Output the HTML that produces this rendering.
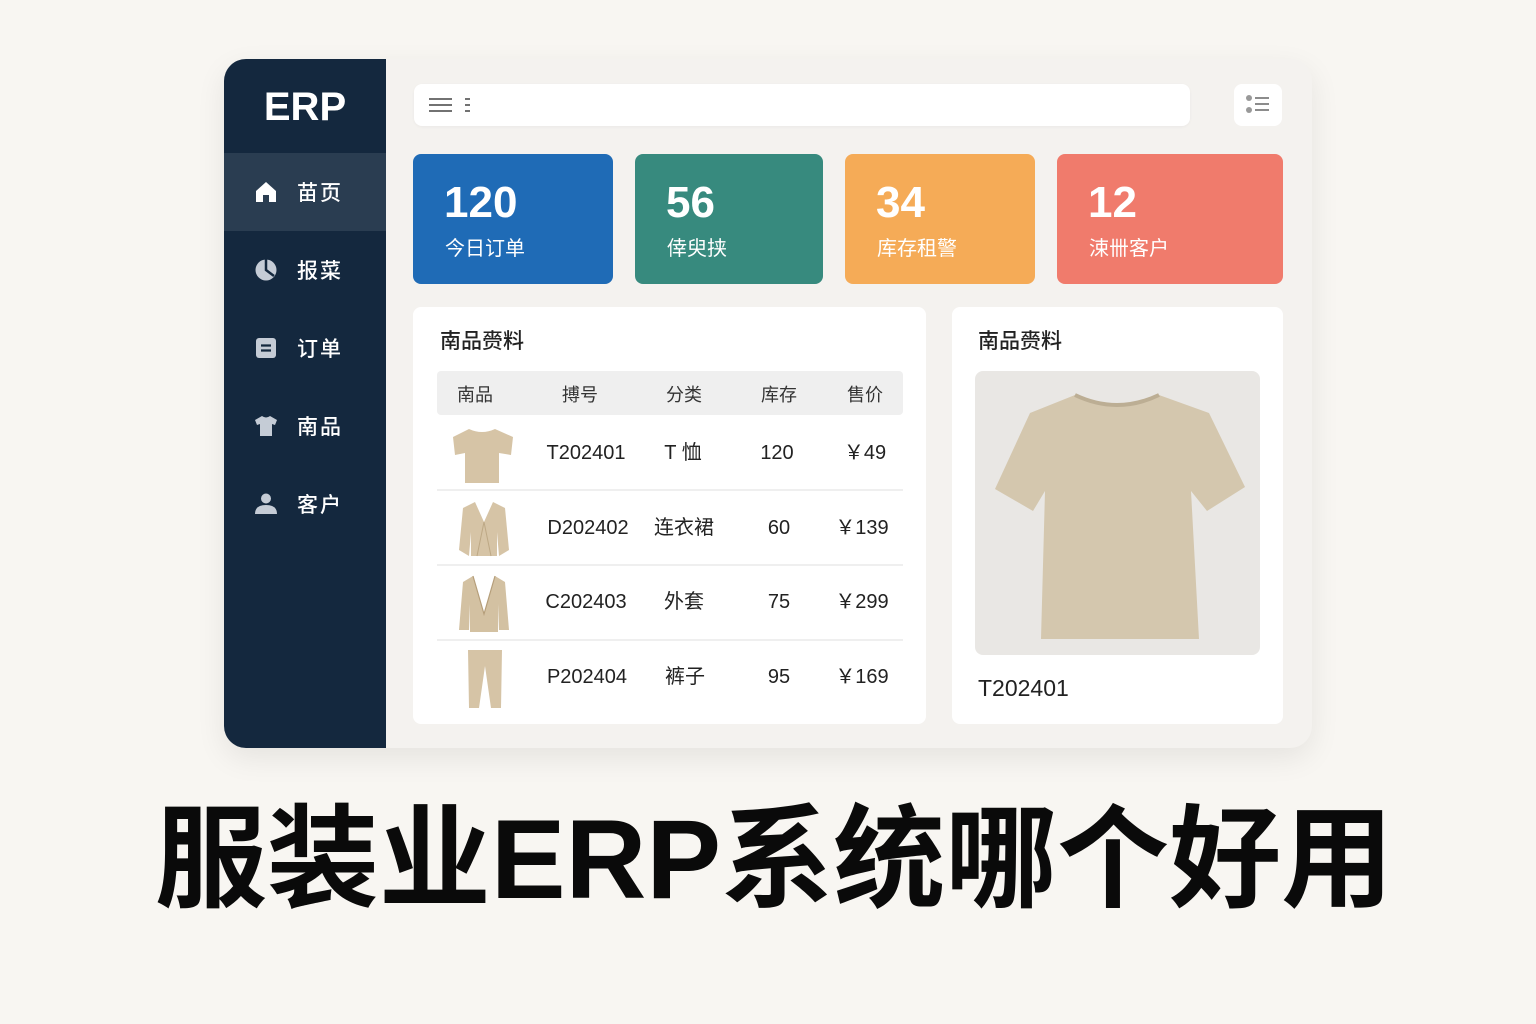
<!DOCTYPE html>
<html><head><meta charset="utf-8"><style>
*{margin:0;padding:0;box-sizing:border-box}
body{width:1536px;height:1024px;background:#f8f6f2;font-family:"Liberation Sans","Noto Sans CJK SC",sans-serif;position:relative;overflow:hidden}
.abs{position:absolute}
.win{left:224px;top:59px;width:1088px;height:689px;border-radius:22px;background:#f4f2ef;overflow:hidden;box-shadow:0 10px 30px rgba(0,0,0,.08)}
.side{left:0;top:0;width:162px;height:689px;background:#14283e}
.logo{left:0;width:162px;top:26px;text-align:center;color:#fff;font-size:40px;font-weight:bold;letter-spacing:0}
.nav{left:0;width:162px;height:78px;color:#fff;font-size:21px}
.nav .ic{position:absolute;left:30px;top:27px;width:24px;height:24px}
.nav span{position:absolute;left:73px;top:24px;font-family:"Noto Sans CJK SC",sans-serif;font-weight:500;letter-spacing:2px}
.card{top:95px;height:130px;border-radius:8px;color:#fff}
.card b{position:absolute;left:31px;top:24px;font-size:44px;font-family:"Liberation Sans",sans-serif;font-weight:bold}
.card span{position:absolute;left:32px;top:78px;font-size:20px;font-family:"Noto Sans CJK SC",sans-serif}
.panel{background:#fff;border-radius:8px;top:248px;height:417px}
.ptitle{position:absolute;top:18px;font-size:21px;color:#222;font-family:"Noto Sans CJK SC",sans-serif;font-weight:500}
.th{position:absolute;font-size:18px;color:#333;font-family:"Noto Sans CJK SC",sans-serif;transform:translateX(-50%)}
.td{position:absolute;font-size:20px;color:#222;transform:translateX(-50%);white-space:nowrap;font-family:"Liberation Sans","Noto Sans CJK SC",sans-serif;height:30px;line-height:30px}
.sep{position:absolute;left:24px;width:466px;height:2px;background:#efefef}
</style></head><body>
<div class="abs win">
 <div class="abs side">
  <div class="abs logo">ERP</div>
  <div class="abs nav" style="top:94px;background:#2a3d51">
   <svg class="ic" viewBox="0 0 24 24"><path d="M2 11 L12 2 L22 11 V22 H15 V15 H9 V22 H2Z" fill="#fff"/></svg><span>苗页</span></div>
  <div class="abs nav" style="top:172px">
   <svg class="ic" viewBox="0 0 24 24"><circle cx="12" cy="12" r="10.5" fill="#c5ccd6"/><path d="M12 1.5 V12 L20 18" stroke="#14283e" stroke-width="2.5" fill="none"/></svg><span>报菜</span></div>
  <div class="abs nav" style="top:250px">
   <svg class="ic" viewBox="0 0 24 24"><rect x="2" y="2" width="20" height="20" rx="3" fill="#c5ccd6"/><path d="M7 9.5H17M7 14.5H17" stroke="#14283e" stroke-width="2.2"/></svg><span>订单</span></div>
  <div class="abs nav" style="top:328px">
   <svg class="ic" viewBox="0 0 24 24"><path d="M8 2 L1 6 L3 11 L6 10 V22 H18 V10 L21 11 L23 6 L16 2 Q12 5 8 2Z" fill="#c5ccd6"/></svg><span>南品</span></div>
  <div class="abs nav" style="top:406px">
   <svg class="ic" viewBox="0 0 24 24"><circle cx="12" cy="6.5" r="5" fill="#c5ccd6"/><path d="M1 22 Q1 13 12 13 Q23 13 23 22Z" fill="#c5ccd6"/></svg><span>客户</span></div>
 </div>
 <div class="abs" style="left:190px;top:25px;width:776px;height:42px;background:#fff;border-radius:8px;box-shadow:0 1px 3px rgba(0,0,0,.04)">
  <svg class="abs" style="left:14px;top:12px" width="50" height="18" viewBox="0 0 50 18"><path d="M1 3H24M1 9H24M1 15H24" stroke="#444" stroke-width="1.6"/><path d="M37 3H42M37 9H42M37 15H42" stroke="#444" stroke-width="1.6"/></svg>
 </div>
 <div class="abs" style="left:1010px;top:25px;width:48px;height:42px;background:#fff;border-radius:8px">
  <svg class="abs" style="left:11px;top:10px" width="26" height="22" viewBox="0 0 26 22"><circle cx="4" cy="4" r="3" fill="#999"/><circle cx="4" cy="16" r="3" fill="#999"/><path d="M10 4H24M10 10H24M10 16H24" stroke="#666" stroke-width="1.6"/></svg>
 </div>
 <div class="abs card" style="left:189px;width:200px;background:#1f6bb6"><b>120</b><span>今日订单</span></div>
 <div class="abs card" style="left:411px;width:188px;background:#378a7e"><b>56</b><span>倖臾挟</span></div>
 <div class="abs card" style="left:621px;width:190px;background:#f5ab57"><b>34</b><span>库存租警</span></div>
 <div class="abs card" style="left:833px;width:226px;background:#f07b6c"><b>12</b><span>涑卌客户</span></div>
 <div class="abs panel" style="left:189px;width:513px">
  <div class="ptitle" style="left:27px">南品赍料</div>
  <div class="abs" style="left:24px;top:64px;width:466px;height:44px;background:#efefef;border-radius:4px"></div>
  <div class="th" style="left:62px;top:74px">南品</div>
  <div class="th" style="left:167px;top:74px">搏号</div>
  <div class="th" style="left:271px;top:74px">分类</div>
  <div class="th" style="left:366px;top:74px">库存</div>
  <div class="th" style="left:452px;top:74px">售价</div>
  <div class="sep" style="top:182px"></div><div class="sep" style="top:257px"></div><div class="sep" style="top:332px"></div>
  <svg class="abs" style="left:36px;top:118px" width="66" height="60" viewBox="0 0 66 60"><path d="M20 4 L4 12 L6 30 L16 28 V58 H50 V28 L62 30 L64 12 L46 4 Q33 10 20 4Z" fill="#d6c4a6"/></svg>
  <svg class="abs" style="left:44px;top:193px" width="54" height="58" viewBox="0 0 54 58"><path d="M18 2 L6 8 L2 50 L12 56 L14 32 V56 H40 V32 L42 56 L52 50 L48 8 L36 2 L27 22Z" fill="#d6c4a6"/><path d="M27 22 L20 56M27 22 L34 56" stroke="#bda885" stroke-width="1" fill="none"/></svg>
  <svg class="abs" style="left:44px;top:267px" width="54" height="60" viewBox="0 0 54 60"><path d="M16 2 L6 8 L2 56 L12 56 L13 30 V58 H41 V30 L42 56 L52 56 L48 8 L38 2 L27 40Z" fill="#d3c1a2"/><path d="M16 2 L27 40 L38 2" stroke="#b59e7a" stroke-width="1.2" fill="none"/></svg>
  <svg class="abs" style="left:52px;top:341px" width="40" height="62" viewBox="0 0 40 62"><path d="M3 2 H37 L36 60 H26 L20 18 L14 60 H4Z" fill="#d6c4a6"/></svg>
  <div class="td" style="left:173px;top:131px">T202401</div><div class="td" style="left:270px;top:131px">T 恤</div><div class="td" style="left:364px;top:131px">120</div><div class="td" style="left:452px;top:131px">￥49</div>
  <div class="td" style="left:175px;top:206px">D202402</div><div class="td" style="left:271px;top:206px">连衣裙</div><div class="td" style="left:366px;top:206px">60</div><div class="td" style="left:449px;top:206px">￥139</div>
  <div class="td" style="left:173px;top:280px">C202403</div><div class="td" style="left:271px;top:280px">外套</div><div class="td" style="left:366px;top:280px">75</div><div class="td" style="left:449px;top:280px">￥299</div>
  <div class="td" style="left:174px;top:355px">P202404</div><div class="td" style="left:272px;top:355px">裤子</div><div class="td" style="left:366px;top:355px">95</div><div class="td" style="left:449px;top:355px">￥169</div>
 </div>
 <div class="abs panel" style="left:728px;width:331px">
  <div class="ptitle" style="left:26px">南品赍料</div>
  <div class="abs" style="left:23px;top:64px;width:285px;height:284px;background:#e9e7e4;border-radius:8px;overflow:hidden">
   <svg width="285" height="284" viewBox="0 0 285 284"><path d="M100 24 L55 42 L20 118 L58 140 L70 120 L66 268 L224 268 L216 120 L232 140 L270 116 L234 42 L184 24 Q142 44 100 24Z" fill="#d4c7ae"/><path d="M100 24 Q142 44 184 24" stroke="#bcae94" stroke-width="4" fill="none"/></svg>
  </div>
  <div class="abs" style="left:26px;top:368px;font-size:23px;color:#222">T202401</div>
 </div>
</div>
<div class="abs" style="left:0;width:1536px;top:792px;text-align:center;font-size:112px;font-weight:700;font-family:'Liberation Sans','Noto Sans CJK SC',sans-serif;color:#0a0a0a;line-height:136px;letter-spacing:0;padding-left:12px">服装业ERP系统哪个好用</div>
</body></html>
